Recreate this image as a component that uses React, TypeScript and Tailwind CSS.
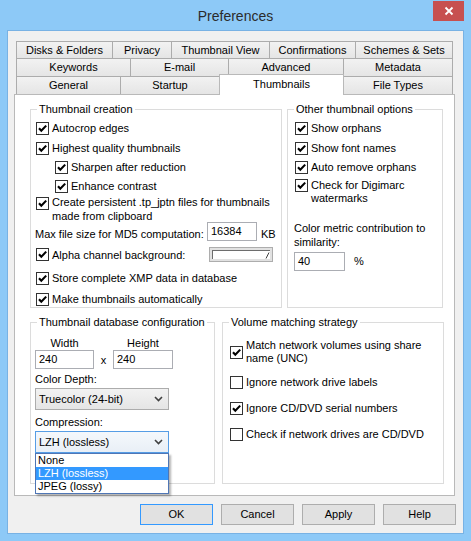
import React from 'react'

type TabDef = { label: string; w: string; selected?: boolean }

const row1: TabDef[] = [
  { label: 'Disks & Folders', w: 'w-[97px]' },
  { label: 'Privacy', w: 'w-[60px]' },
  { label: 'Thumbnail View', w: 'w-[99px]' },
  { label: 'Confirmations', w: 'w-[87px]' },
  { label: 'Schemes & Sets', w: 'w-[98px]' },
]
const row2: TabDef[] = [
  { label: 'Keywords', w: 'w-[115px]' },
  { label: 'E-mail', w: 'w-[99px]' },
  { label: 'Advanced', w: 'w-[116px]' },
  { label: 'Metadata', w: 'w-[110px]' },
]
const row3: TabDef[] = [
  { label: 'General', w: 'w-[105px]' },
  { label: 'Startup', w: 'w-[100px]' },
  { label: 'Thumbnails', w: 'w-[125px]', selected: true },
  { label: 'File Types', w: 'w-[110px]' },
]

function TabRow({ tabs, h }: { tabs: TabDef[]; h: string }) {
  return (
    <div className={`flex items-end ml-[8px] ${h}`}>
      {tabs.map((t, i) =>
        t.selected ? (
          <div key={t.label}
            className={`${t.w} h-[21px] -mb-px relative z-10 bg-white border border-b-0 border-[#b9b9b9] flex justify-center pt-[2px] leading-[14px] ${i > 0 ? '-ml-px' : ''}`}>
            {t.label}
          </div>
        ) : (
          <div key={t.label}
            className={`${t.w} h-full bg-linear-to-b from-[#f2f2f2] to-[#e5e5e5] border border-b-0 border-[#acacac] flex items-center justify-center ${i > 0 ? '-ml-px' : ''}`}>
            {t.label}
          </div>
        )
      )}
    </div>
  )
}

function Box({ checked }: { checked: boolean }) {
  return (
    <span className="w-[13px] h-[13px] border border-[#333333] bg-white flex items-center justify-center shrink-0">
      {checked && (
        <svg width="11" height="11" viewBox="0 0 11 11">
          <path d="M2 5.2 L4.3 7.8 L9.2 2.6" fill="none" stroke="#000" strokeWidth="2.1" />
        </svg>
      )}
    </span>
  )
}

function Check({ checked = true, className = '', children }: { checked?: boolean; className?: string; children: React.ReactNode }) {
  return (
    <div className={`flex items-center gap-[3px] h-[14px] whitespace-nowrap ${className}`}>
      <Box checked={checked} />
      <span className="leading-[14px]">{children}</span>
    </div>
  )
}

function Group({ title, className = '', children }: { title: string; className?: string; children: React.ReactNode }) {
  return (
    <div className={`relative border border-[#dcdcdc] shrink-0 ${className}`}>
      <span className="absolute -top-[8px] left-[6px] bg-white px-[2px] leading-[14px] whitespace-nowrap">{title}</span>
      {children}
    </div>
  )
}

function Input({ value, className = '' }: { value: string; className?: string }) {
  return (
    <div className={`h-[19px] border border-[#abadb3] bg-white flex items-center pl-[3px] ${className}`}>{value}</div>
  )
}

function Chevron() {
  return (
    <svg width="9" height="6" viewBox="0 0 9 6" className="shrink-0">
      <path d="M1 1 L4.5 4.5 L8 1" fill="none" stroke="#404040" strokeWidth="1.6" />
    </svg>
  )
}

function Button({ label, isDefault }: { label: string; isDefault?: boolean }) {
  return (
    <div className={`w-[73px] h-[21px] flex items-center justify-center bg-[#e1e1e1] border ${isDefault ? 'border-[#3399ff]' : 'border-[#adadad]'}`}>
      {label}
    </div>
  )
}

export default function App() {
  return (
    <div className="w-[471px] h-[541px] bg-[#8dc9f7] flex flex-col px-[7px] overflow-hidden text-[11px] text-black font-['Liberation_Sans',Arial,sans-serif]">
      {/* title bar */}
      <div className="h-[30px] grid grid-cols-[1fr_auto_1fr] shrink-0">
        <div />
        <div className="self-center text-[14px] text-[#2b2b2b] leading-[18px] pt-[1px]">Preferences</div>
        <div className="flex justify-end items-start pt-[1px]">
          <div className="w-[31px] h-[20px] bg-[#c75050] flex items-center justify-center">
            <svg width="10" height="10" viewBox="0 0 10 10">
              <path d="M1.5 1.5 L8.5 8.5 M8.5 1.5 L1.5 8.5" stroke="#fff" strokeWidth="1.8" />
            </svg>
          </div>
        </div>
      </div>

      {/* client area */}
      <div className="w-[457px] h-[504px] bg-[#f0f0f0] border border-[#78b2e4] flex flex-col shrink-0">
        <div className="pt-[10px] flex flex-col">
          <TabRow tabs={row1} h="h-[17px]" />
          <TabRow tabs={row2} h="h-[18px]" />
          <TabRow tabs={row3} h="h-[18px]" />
        </div>

        {/* tab page */}
        <div className="ml-[6px] w-[441px] h-[402px] bg-white border border-[#b9b9b9] flex flex-col pt-[14px] pl-[15px]">
          <div className="flex gap-[5px]">
            <Group title="Thumbnail creation" className="w-[252px] h-[199px]">
              <div className="flex flex-col pt-[11px] pl-[5px]">
                <Check>Autocrop edges</Check>
                <Check className="mt-[6px]">Highest quality thumbnails</Check>
                <Check className="mt-[5px] ml-[19px]">Sharpen after reduction</Check>
                <Check className="mt-[5px] ml-[19px]">Enhance contrast</Check>
                <div className="mt-[3px] flex items-start gap-[3px] whitespace-nowrap">
                  <span className="mt-px"><Box checked /></span>
                  <span className="leading-[13.5px]">Create persistent .tp_jptn files for thumbnails<br />made from clipboard</span>
                </div>
                <div className="mt-[-1px] -ml-px flex items-end h-[19px]">
                  <span className="w-[172px] leading-[14px] whitespace-nowrap">Max file size for MD5 computation:</span>
                  <Input value="16384" className="w-[50px]" />
                  <span className="ml-[4px] leading-[14px]">KB</span>
                </div>
                <div className="mt-[6px] flex items-center h-[15px]">
                  <Check className="w-[173px]">Alpha channel background:</Check>
                  <div className="w-[64px] h-[15px] border border-[#adadad] bg-[#e1e1e1] p-[2px] flex">
                    <div className="flex-1 bg-white border-t border-l border-[#6d6d6d] flex items-end justify-end">
                      <svg width="5" height="7" viewBox="0 0 5 7">
                        <path d="M1 6.5 L4 0.5" stroke="#404040" strokeWidth="1" />
                      </svg>
                    </div>
                  </div>
                </div>
                <Check className="mt-[9px]">Store complete XMP data in database</Check>
                <Check className="mt-[7px]">Make thumbnails automatically</Check>
              </div>
            </Group>

            <Group title="Other thumbnail options" className="w-[156px] h-[199px]">
              <div className="flex flex-col pt-[11px] pl-[7px]">
                <Check>Show orphans</Check>
                <Check className="mt-[6px]">Show font names</Check>
                <Check className="mt-[5px]">Auto remove orphans</Check>
                <div className="mt-[5px] flex items-start gap-[3px] whitespace-nowrap">
                  <Box checked />
                  <span className="leading-[13px]">Check for Digimarc<br />watermarks</span>
                </div>
                <div className="mt-[16px] -ml-px leading-[14px] whitespace-nowrap">Color metric contribution to<br />similarity:</div>
                <div className="mt-[3px] -ml-px flex items-center">
                  <Input value="40" className="w-[51px]" />
                  <span className="ml-[9px]">%</span>
                </div>
              </div>
            </Group>
          </div>

          <div className="mt-[14px] flex gap-[7px]">
            <Group title="Thumbnail database configuration" className="w-[185px] h-[162px]">
              <div className="flex flex-col pt-[13px] pl-[4px]">
                <div className="flex items-end">
                  <div className="w-[59px] flex flex-col items-center">
                    <span className="leading-[14px]">Width</span>
                    <Input value="240" className="w-[59px]" />
                  </div>
                  <span className="w-[19px] text-center leading-[14px] mb-[2px]">x</span>
                  <div className="w-[60px] flex flex-col items-center">
                    <span className="leading-[14px]">Height</span>
                    <Input value="240" className="w-[60px]" />
                  </div>
                </div>
                <span className="mt-[3px] leading-[14px]">Color Depth:</span>
                <div className="mt-[2px] w-[134px] h-[22px] border border-[#acacac] bg-linear-to-b from-[#f2f2f2] to-[#e5e5e5] flex items-center justify-between pl-[3px] pr-[5px]">
                  <span>Truecolor (24-bit)</span>
                  <Chevron />
                </div>
                <span className="mt-[5px] leading-[14px]">Compression:</span>
                <div className="mt-[2px] relative w-[134px]">
                  <div className="w-[134px] h-[22px] border border-[#569de5] bg-linear-to-b from-[#f4f8fc] to-[#e9eff6] flex items-center justify-between pl-[3px] pr-[5px]">
                    <span>LZH (lossless)</span>
                    <Chevron />
                  </div>
                  <div className="absolute top-[22px] left-0 w-[134px] z-20 bg-white border border-[#4f76b5] shadow-[2px_2px_2px_rgba(0,0,0,0.3)] flex flex-col">
                    <span className="h-[13px] leading-[13px] pl-[2px]">None</span>
                    <span className="h-[13px] leading-[13px] pl-[2px] bg-[#3399ff] text-white">LZH (lossless)</span>
                    <span className="h-[13px] leading-[13px] pl-[2px]">JPEG (lossy)</span>
                  </div>
                </div>
              </div>
            </Group>

            <Group title="Volume matching strategy" className="w-[222px] h-[162px]">
              <div className="flex flex-col pt-[16px] pl-[7px]">
                <div className="flex items-center gap-[3px] whitespace-nowrap">
                  <Box checked />
                  <span className="leading-[13px]">Match network volumes using share<br />name (UNC)</span>
                </div>
                <Check checked={false} className="mt-[10px]">Ignore network drive labels</Check>
                <Check className="mt-[12px]">Ignore CD/DVD serial numbers</Check>
                <Check checked={false} className="mt-[12px]">Check if network drives are CD/DVD</Check>
              </div>
            </Group>
          </div>
        </div>

        <div className="mt-[8px] flex justify-end gap-[8px] pr-[7px]">
          <Button label="OK" isDefault />
          <Button label="Cancel" />
          <Button label="Apply" />
          <Button label="Help" />
        </div>
      </div>
    </div>
  )
}
